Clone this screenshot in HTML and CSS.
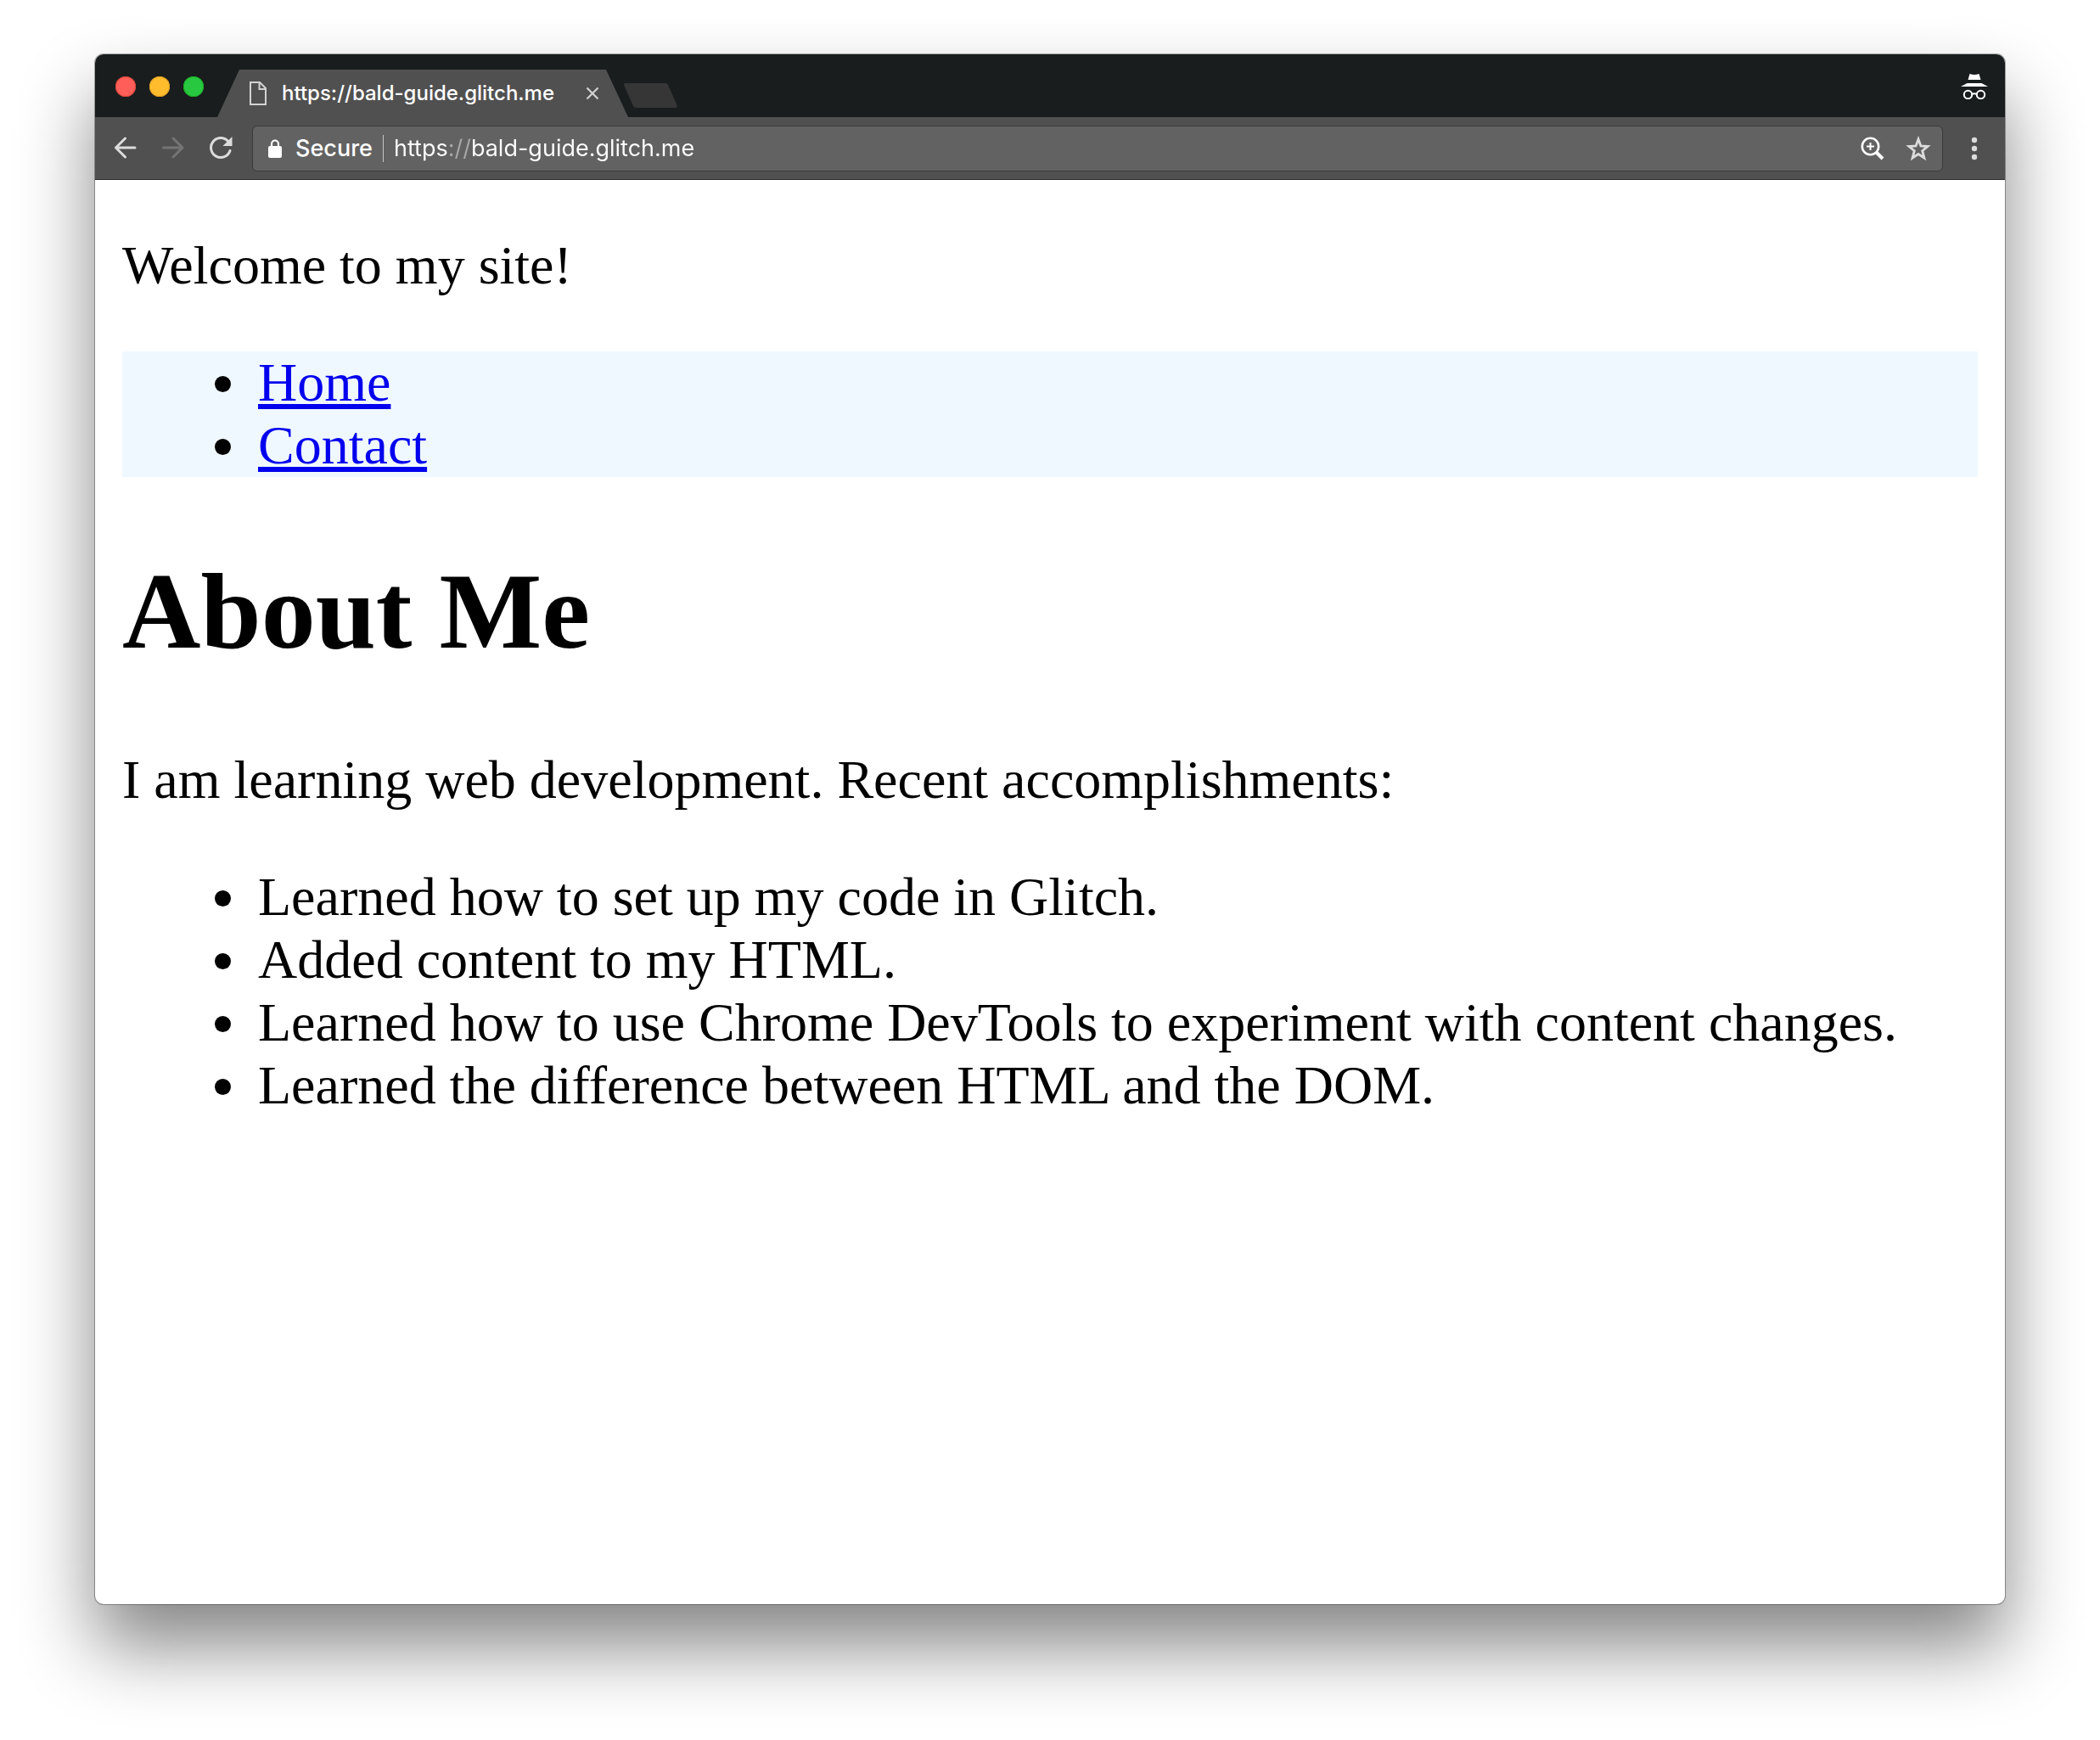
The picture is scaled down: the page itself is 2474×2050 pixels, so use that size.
FILE: index.html
```html
<!DOCTYPE html>
<html lang="en">
<head>
<meta charset="utf-8">
<title>https://bald-guide.glitch.me</title>
<link rel="stylesheet" href="styles.css">
</head>
<body>
<div class="window">
  <header class="chrome">
    <div class="titlebar">
      <div class="lights">
        <button class="light light-close" aria-label="Close window"></button>
        <button class="light light-minimize" aria-label="Minimize window"></button>
        <button class="light light-zoom" aria-label="Zoom window"></button>
      </div>
      <div class="tab">
        <svg class="tab-icon" width="20" height="28" viewBox="0 0 20 28" fill="none" stroke="#d2d2d2" stroke-width="2" aria-hidden="true"><path d="M1 1h11l7 7v19H1zM11.500 1v8H19"/></svg>
        <span class="tab-title">https://bald-guide.glitch.me</span>
        <button class="tab-close" aria-label="Close tab"><svg width="16" height="16" viewBox="0 0 16 16" fill="none" stroke="#d2d2d2" stroke-width="2.200"><path d="M1.500 1.500l13 13M14.500 1.500l-13 13"/></svg></button>
      </div>
      <button class="new-tab" aria-label="New tab"><svg width="64" height="30" viewBox="0 0 64 30"><path d="M2 0h48q2 0 3 2l11 25q0 2-2 2H16q-3 0-4-2L1 2q0-2 1-2z" fill="#363636"/></svg></button>
      <svg class="incognito" width="32" height="30" viewBox="0 0 32 30" role="img" aria-label="Incognito"><path d="M10.500 0q5.500 2 11 0l2 7h-15zM7.500 11h17l7.500 4H0z" fill="#fff"/><g fill="none" stroke="#fff" stroke-width="2"><circle cx="8.500" cy="24.500" r="4.700"/><circle cx="23.500" cy="24.500" r="4.700"/><path d="M13.200 24q2.800-1.500 5.600 0"/></g></svg>
    </div>
    <div class="toolbar">
      <button class="tool" aria-label="Back"><svg width="28" height="28" viewBox="0 0 28 28" fill="none" stroke="#dcdcdc" stroke-width="3" stroke-linecap="round" stroke-linejoin="round"><path d="M25 13H2.500M13.500 2l-11 11 11 11"/></svg></button>
      <button class="tool" aria-label="Forward" disabled><svg width="28" height="28" viewBox="0 0 28 28" fill="none" stroke="#747474" stroke-width="3" stroke-linecap="round" stroke-linejoin="round"><path d="M2.500 13H25M14 2l11 11-11 11"/></svg></button>
      <button class="tool" aria-label="Reload"><svg width="28" height="28" viewBox="0 0 28 28"><path d="M22.800 5.500A11.500 11.500 0 1 0 25 16.500" fill="none" stroke="#dcdcdc" stroke-width="3" stroke-linecap="round"/><path d="M27.500 0v11h-11z" fill="#dcdcdc"/></svg></button>
      <div class="omnibox">
        <svg class="lock" width="16" height="22" viewBox="0 0 16 22" aria-hidden="true"><rect y="8" width="16" height="14" rx="2" fill="#fff"/><path d="M4 9V5.500a4 4 0 0 1 8 0V9" fill="none" stroke="#fff" stroke-width="2.200"/></svg>
        <label class="secure" for="url">Secure</label>
        <input class="url" id="url" type="text" value="https://bald-guide.glitch.me" spellcheck="false">
        <button class="tool" aria-label="Zoom level"><svg width="28" height="28" viewBox="0 0 28 28" fill="none" stroke="#fff"><circle cx="11.500" cy="11.500" r="9.700" stroke-width="2.600"/><path d="M18.500 18.500l7.500 7.500" stroke-width="4"/><path d="M11.500 7v9M7 11.500h9" stroke-width="2"/></svg></button>
        <button class="tool" aria-label="Bookmark this page"><svg width="30" height="30" viewBox="0 0 30 30"><path d="M15 4l2.900 8 8.100.5-6.300 5.200 2.200 8.300L15 21.500 8.100 26l2.200-8.300L4 12.500l8.100-.5z" fill="none" stroke="#dcdcdc" stroke-width="2.800"/></svg></button>
      </div>
      <button class="tool menu" aria-label="Menu"><svg width="28" height="28" viewBox="0 0 28 28" fill="#dcdcdc"><circle cx="14" cy="4" r="3.200"/><circle cx="14" cy="14" r="3.200"/><circle cx="14" cy="24" r="3.200"/></svg></button>
    </div>
  </header>
  <main class="page">
    <p>Welcome to my site!</p>
    <nav>
      <ul class="nav-list">
        <li><a href="#home">Home</a></li>
        <li><a href="#contact">Contact</a></li>
      </ul>
    </nav>
    <h1>About Me</h1>
    <p>I am learning web development. Recent accomplishments:</p>
    <ul>
      <li>Learned how to set up my code in Glitch.</li>
      <li>Added content to my HTML.</li>
      <li>Learned how to use Chrome DevTools to experiment with content changes.</li>
      <li>Learned the difference between HTML and the DOM.</li>
    </ul>
  </main>
</div>
</body>
</html>
```
FILE: styles.css
```css
* {
  box-sizing: border-box;
}

body {
  margin: 0;
  padding: 64px 112px 160px;
  min-height: 100vh;
  display: flex;
  background: #fff;
}

button {
  padding: 0;
  border: 0;
  background: none;
  display: grid;
  place-items: center;
}

svg {
  display: block;
  flex: none;
}

.window {
  flex: 1;
  min-width: 0;
  border-radius: 10px;
  background: #fff;
  box-shadow: 0 0 0 1px rgba(0, 0, 0, 0.32), 0 50px 88px rgba(0, 0, 0, 0.48);
}

/* Browser frame */
.chrome {
  font-family: Inter, "Liberation Sans", sans-serif;
  color: #fff;
}

.titlebar {
  height: 74px;
  display: flex;
  align-items: flex-end;
  padding: 0 20px 0 24px;
  border-radius: 10px 10px 0 0;
  background: #191d1d;
}

.lights {
  display: flex;
  gap: 16px;
  padding-bottom: 24px;
}

.light {
  width: 24px;
  height: 24px;
  border-radius: 50%;
}

.light-close {
  background: #ff5f58;
  box-shadow: inset 0 0 0 1px #e2463f;
}

.light-minimize {
  background: #ffbd2e;
  box-shadow: inset 0 0 0 1px #dfa023;
}

.light-zoom {
  background: #28c940;
  box-shadow: inset 0 0 0 1px #1daf2b;
}

.tab {
  width: 484px;
  height: 56px;
  margin-left: 16px;
  padding: 0 34px 0 38px;
  display: flex;
  align-items: center;
  background: #505050;
  clip-path: polygon(0 100%, 26px 0, 458px 0, 100% 100%);
}

.tab-title {
  flex: 1;
  margin-left: 18px;
  font-size: 24px;
  font-weight: 500;
  line-height: 28px;
  white-space: nowrap;
}

.new-tab {
  margin: 0 auto 10px -6px;
}

.incognito {
  margin-bottom: 21px;
}

.toolbar {
  height: 74px;
  display: flex;
  align-items: center;
  gap: 28px;
  padding: 0 22px;
  background: #505050;
  border-bottom: 1px solid #2c2c2c;
}

.omnibox {
  flex: 1;
  min-width: 0;
  height: 54px;
  margin-left: -5px;
  padding: 0 13px 0 18px;
  display: flex;
  align-items: center;
  border: 1px solid #3a3a3a;
  border-radius: 6px;
  background: #626262;
}

.secure {
  margin: 0 12px 0 16px;
  font-size: 27px;
  font-weight: 500;
  line-height: 32px;
}

/* The scheme separator is dimmed by the gradient showing through the text */
.url {
  flex: 1;
  min-width: 0;
  height: 32px;
  padding: 0 0 0 12px;
  border: 0;
  border-left: 1px solid #c4c4c4;
  outline: 0;
  font: 400 27px/32px Inter, "Liberation Sans", sans-serif;
  color: transparent;
  caret-color: #fff;
  background: linear-gradient(90deg, #fff 76px, #a8a8a8 76px, #a8a8a8 103px, #fff 103px);
  background-clip: text;
  -webkit-background-clip: text;
}

.omnibox .tool + .tool {
  margin-left: 25px;
}

.menu {
  margin-left: -5px;
}

/* Page shown in the browser */
.page {
  padding: 64px 32px;
  font: 64px/74px "Liberation Serif", "Times New Roman", serif;
  color: #000;
}

.page p {
  margin: 0 0 64px;
}

.page h1 {
  margin: 84px 0 88px;
  font-size: 128px;
  line-height: 148px;
}

.page ul {
  margin: 0;
  padding-left: 154px;
}

.page li {
  padding-left: 6px;
}

.page .nav-list {
  background: #f0f8ff;
}

.page a {
  color: #0000ee;
  text-decoration-thickness: 6px;
  text-underline-offset: 4px;
}
```
